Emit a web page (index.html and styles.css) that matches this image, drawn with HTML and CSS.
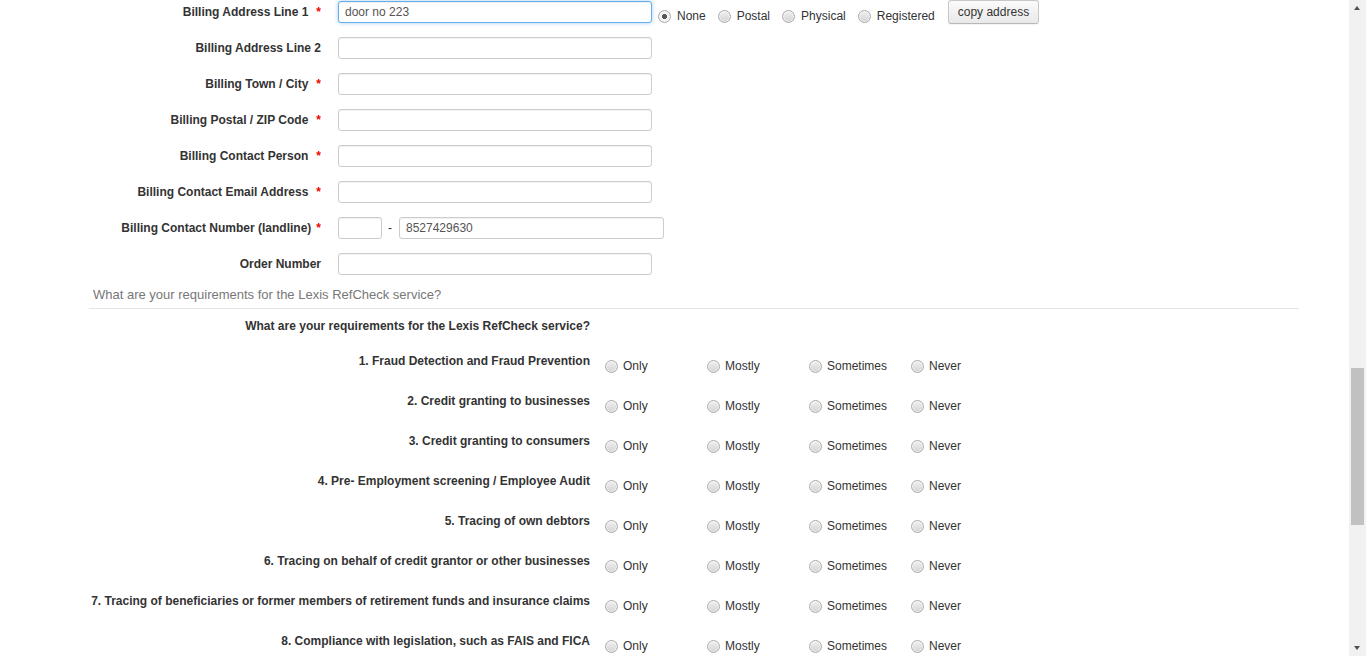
FILE: index.html
```html
<!DOCTYPE html>
<html>
<head>
<meta charset="utf-8">
<link rel="stylesheet" href="styles.css">
</head>
<body>
<div class="page">
  <div class="form">
    <div class="row">
      <label class="lbl">Billing Address Line 1<span class="req">*</span></label>
      <div class="ctrl">
        <input class="inp inp-main focused" type="text" value="door no 223">
        <div class="addr-type">
          <label class="opt"><input class="rad" type="radio" name="atype" checked><span>None</span></label>
          <label class="opt"><input class="rad" type="radio" name="atype"><span>Postal</span></label>
          <label class="opt"><input class="rad" type="radio" name="atype"><span>Physical</span></label>
          <label class="opt"><input class="rad" type="radio" name="atype"><span>Registered</span></label>
        </div>
        <button class="btn" type="button">copy address</button>
      </div>
    </div>
    <div class="row">
      <label class="lbl">Billing Address Line 2</label>
      <div class="ctrl"><input class="inp inp-main" type="text"></div>
    </div>
    <div class="row">
      <label class="lbl">Billing Town / City<span class="req">*</span></label>
      <div class="ctrl"><input class="inp inp-main" type="text"></div>
    </div>
    <div class="row">
      <label class="lbl">Billing Postal / ZIP Code<span class="req">*</span></label>
      <div class="ctrl"><input class="inp inp-main" type="text"></div>
    </div>
    <div class="row">
      <label class="lbl">Billing Contact Person<span class="req">*</span></label>
      <div class="ctrl"><input class="inp inp-main" type="text"></div>
    </div>
    <div class="row">
      <label class="lbl">Billing Contact Email Address<span class="req">*</span></label>
      <div class="ctrl"><input class="inp inp-main" type="text"></div>
    </div>
    <div class="row">
      <label class="lbl">Billing Contact Number (landline)<span class="req req-tight">*</span></label>
      <div class="ctrl">
        <input class="inp inp-code" type="text">
        <span class="dash">-</span>
        <input class="inp inp-phone" type="text" value="8527429630">
      </div>
    </div>
    <div class="row">
      <label class="lbl">Order Number</label>
      <div class="ctrl"><input class="inp inp-main" type="text"></div>
    </div>
  </div>

  <div class="section-title">What are your requirements for the Lexis RefCheck service?</div>

  <div class="qhead">
    <div class="qlbl">What are your requirements for the Lexis RefCheck service?</div>
  </div>

  <div class="qlist">
    <div class="qrow">
      <div class="qlbl">1. Fraud Detection and Fraud Prevention</div>
      <div class="qopts">
        <label class="qopt"><input class="rad" type="radio" name="q1"><span>Only</span></label>
        <label class="qopt"><input class="rad" type="radio" name="q1"><span>Mostly</span></label>
        <label class="qopt"><input class="rad" type="radio" name="q1"><span>Sometimes</span></label>
        <label class="qopt"><input class="rad" type="radio" name="q1"><span>Never</span></label>
      </div>
    </div>
    <div class="qrow">
      <div class="qlbl">2. Credit granting to businesses</div>
      <div class="qopts">
        <label class="qopt"><input class="rad" type="radio" name="q2"><span>Only</span></label>
        <label class="qopt"><input class="rad" type="radio" name="q2"><span>Mostly</span></label>
        <label class="qopt"><input class="rad" type="radio" name="q2"><span>Sometimes</span></label>
        <label class="qopt"><input class="rad" type="radio" name="q2"><span>Never</span></label>
      </div>
    </div>
    <div class="qrow">
      <div class="qlbl">3. Credit granting to consumers</div>
      <div class="qopts">
        <label class="qopt"><input class="rad" type="radio" name="q3"><span>Only</span></label>
        <label class="qopt"><input class="rad" type="radio" name="q3"><span>Mostly</span></label>
        <label class="qopt"><input class="rad" type="radio" name="q3"><span>Sometimes</span></label>
        <label class="qopt"><input class="rad" type="radio" name="q3"><span>Never</span></label>
      </div>
    </div>
    <div class="qrow">
      <div class="qlbl">4. Pre- Employment screening / Employee Audit</div>
      <div class="qopts">
        <label class="qopt"><input class="rad" type="radio" name="q4"><span>Only</span></label>
        <label class="qopt"><input class="rad" type="radio" name="q4"><span>Mostly</span></label>
        <label class="qopt"><input class="rad" type="radio" name="q4"><span>Sometimes</span></label>
        <label class="qopt"><input class="rad" type="radio" name="q4"><span>Never</span></label>
      </div>
    </div>
    <div class="qrow">
      <div class="qlbl">5. Tracing of own debtors</div>
      <div class="qopts">
        <label class="qopt"><input class="rad" type="radio" name="q5"><span>Only</span></label>
        <label class="qopt"><input class="rad" type="radio" name="q5"><span>Mostly</span></label>
        <label class="qopt"><input class="rad" type="radio" name="q5"><span>Sometimes</span></label>
        <label class="qopt"><input class="rad" type="radio" name="q5"><span>Never</span></label>
      </div>
    </div>
    <div class="qrow">
      <div class="qlbl">6. Tracing on behalf of credit grantor or other businesses</div>
      <div class="qopts">
        <label class="qopt"><input class="rad" type="radio" name="q6"><span>Only</span></label>
        <label class="qopt"><input class="rad" type="radio" name="q6"><span>Mostly</span></label>
        <label class="qopt"><input class="rad" type="radio" name="q6"><span>Sometimes</span></label>
        <label class="qopt"><input class="rad" type="radio" name="q6"><span>Never</span></label>
      </div>
    </div>
    <div class="qrow">
      <div class="qlbl">7. Tracing of beneficiaries or former members of retirement funds and insurance claims</div>
      <div class="qopts">
        <label class="qopt"><input class="rad" type="radio" name="q7"><span>Only</span></label>
        <label class="qopt"><input class="rad" type="radio" name="q7"><span>Mostly</span></label>
        <label class="qopt"><input class="rad" type="radio" name="q7"><span>Sometimes</span></label>
        <label class="qopt"><input class="rad" type="radio" name="q7"><span>Never</span></label>
      </div>
    </div>
    <div class="qrow">
      <div class="qlbl">8. Compliance with legislation, such as FAIS and FICA</div>
      <div class="qopts">
        <label class="qopt"><input class="rad" type="radio" name="q8"><span>Only</span></label>
        <label class="qopt"><input class="rad" type="radio" name="q8"><span>Mostly</span></label>
        <label class="qopt"><input class="rad" type="radio" name="q8"><span>Sometimes</span></label>
        <label class="qopt"><input class="rad" type="radio" name="q8"><span>Never</span></label>
      </div>
    </div>
  </div>
</div>

<div class="scrollbar">
  <div class="sb-up"></div>
  <div class="sb-thumb"></div>
  <div class="sb-down"></div>
</div>
</body>
</html>
```

FILE: styles.css
```css
html, body {
  margin: 0;
  padding: 0;
  background: #fff;
  height: 656px;
  overflow: hidden;
}

body {
  font-family: "Liberation Sans", Arial, sans-serif;
  font-size: 12px;
  color: #333;
}

.page {
  width: 1210px;
  margin-left: 89px;
  padding-top: 1px;
}

/* ---------- top form ---------- */
.form {
  display: flex;
  flex-direction: column;
  gap: 14px;
}

.row {
  display: grid;
  grid-template-columns: 232px 1fr;
  column-gap: 17px;
  height: 22px;
}

.lbl {
  font-weight: bold;
  text-align: right;
  line-height: 22px;
  white-space: nowrap;
}

.req {
  color: #e00;
  font-weight: bold;
  margin-left: 8px;
}

.req.req-tight { margin-left: 5px; }

.ctrl {
  display: flex;
  align-items: flex-start;
}

.inp {
  box-sizing: border-box;
  height: 22px;
  border: 1px solid #ccc;
  border-radius: 3px;
  padding: 0 6px;
  font-family: "Liberation Sans", Arial, sans-serif;
  font-size: 12px;
  color: #555;
  background: #fff;
  outline: none;
  box-shadow: inset 0 1px 1px rgba(0, 0, 0, 0.06);
  margin: 0;
}

.inp.focused {
  border-color: #66afe9;
  box-shadow: inset 0 1px 1px rgba(0,0,0,.075), 0 0 4px rgba(102, 175, 233, 0.6);
}

.inp-main { width: 314px; }
.inp-code { width: 44px; }
.inp-phone { width: 265px; }

.dash {
  line-height: 22px;
  margin: 0 7px 0 6px;
  width: 4px;
}

.addr-type {
  display: flex;
  margin-left: 6px;
  padding-top: 8px;
}

.opt {
  display: inline-flex;
  align-items: center;
  height: 14px;
  margin-right: 12px;
  color: #333;
}

.opt .rad { margin-right: 6px; }

.btn {
  box-sizing: border-box;
  height: 24px;
  padding: 0 9px 1px;
  margin-left: 1px;
  margin-top: -1px;
  border: 1px solid #c8c8c8;
  border-bottom-color: #b8b8b8;
  border-radius: 3px;
  background: linear-gradient(#fbfbfb, #e9e9e9);
  font-family: "Liberation Sans", Arial, sans-serif;
  font-size: 12px;
  color: #333;
  box-shadow: 0 1px 1px rgba(0,0,0,0.05);
}

/* ---------- radio ---------- */
.rad {
  -webkit-appearance: none;
  appearance: none;
  box-sizing: border-box;
  width: 13px;
  height: 13px;
  margin: 0;
  border: 1px solid #ababab;
  border-radius: 50%;
  background: linear-gradient(#f0f0f0, #d4d4d4);
  box-shadow: inset 0 0 0 1px rgba(255,255,255,0.5);
  flex: none;
}

.rad:checked {
  background: radial-gradient(circle, #555 0, #555 2.2px, #f6f6f6 2.8px, #e2e2e2 100%);
}

/* ---------- section ---------- */
.section-title {
  margin-top: 10px;
  padding: 0 0 3px 4px;
  font-size: 13px;
  line-height: 20px;
  color: #777;
  border-bottom: 1px solid #e5e5e5;
}

.qhead {
  margin-top: 7px;
  height: 35px;
  display: grid;
  grid-template-columns: 501px 1fr;
}

.qlbl {
  font-weight: bold;
  text-align: right;
  line-height: 20px;
  white-space: nowrap;
}

.qrow {
  display: grid;
  grid-template-columns: 501px 1fr;
  height: 40px;
}

.qopts {
  display: flex;
  padding-top: 5px;
  padding-left: 15px;
}

.qopt {
  display: inline-flex;
  align-items: center;
  width: 102px;
  height: 20px;
  color: #333;
}

.qopt .rad { margin-right: 5px; }

/* ---------- fake scrollbar ---------- */
.scrollbar {
  position: fixed;
  top: 0;
  right: 0;
  width: 17px;
  height: 656px;
  background: #f1f1f1;
}

.sb-up, .sb-down {
  position: absolute;
  left: 5px;
  width: 0;
  height: 0;
  border-left: 3.5px solid transparent;
  border-right: 3.5px solid transparent;
}

.sb-up {
  top: 6px;
  border-bottom: 4px solid #505050;
}

.sb-down {
  bottom: 6px;
  border-top: 4px solid #505050;
}

.sb-thumb {
  position: absolute;
  left: 2px;
  top: 368px;
  width: 13px;
  height: 157px;
  background: #c1c1c1;
}
```
